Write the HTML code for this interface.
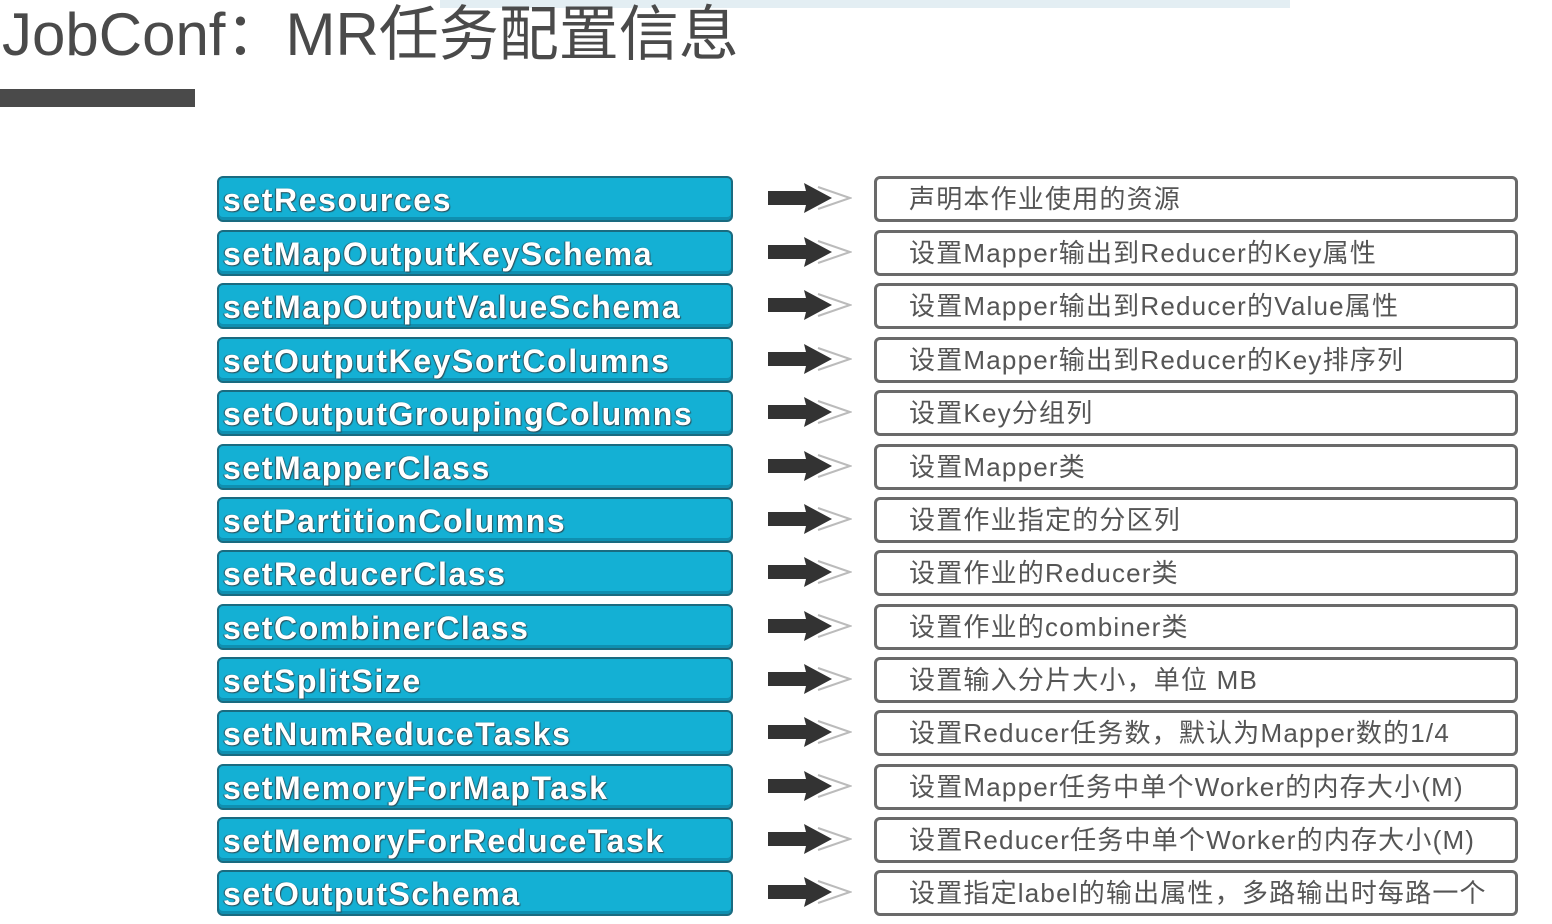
<!DOCTYPE html>
<html><head><meta charset="utf-8"><style>
html,body{margin:0;padding:0;background:#fff;width:1552px;height:924px;overflow:hidden;position:relative;font-family:"Liberation Sans","Noto Sans CJK SC",sans-serif}
.topbar{position:absolute;left:440px;top:0;width:850px;height:8px;background:#e3eef3}
.title{position:absolute;left:2px;top:0px;font-size:60px;color:#4a4a4a;letter-spacing:0;line-height:70px;white-space:nowrap}
.ul{position:absolute;left:0;top:89px;width:195px;height:18px;background:#4a4a4a}
.l{position:absolute;left:217px;width:508px;height:42px;background:#14b0d4;border:2px solid #1a6b80;border-radius:6px;box-shadow:inset 0 -3px 0 #0f8fb0;color:#fff;font-weight:bold;font-size:32px;line-height:44px;padding-left:4px;box-sizing:content-box;text-shadow:1px 1px 1px #2a4f5a,-1px 0 1px #2a4f5a;white-space:nowrap;letter-spacing:1.6px;overflow:hidden}
.r{position:absolute;left:874px;width:606px;height:40px;border:3px solid #6a6a6a;border-radius:6px;background:#fff;color:#555;font-size:26px;line-height:40px;padding-left:32px;box-sizing:content-box;white-space:nowrap;letter-spacing:1.2px;overflow:hidden}
.a{position:absolute;left:766px;width:86px;height:34px}
</style></head><body>
<div class="topbar"></div>
<div class="title">JobConf：MR任务配置信息</div>
<div class="ul"></div>
<svg width="0" height="0" style="position:absolute"><defs>
<g id="ar"><path d="M2 10 H40 L38 2 L66 17 L38 32 L40 24 H2 Z" fill="#333"/><path d="M52 6 L84 17 L52 28" fill="none" stroke="#bbb" stroke-width="2"/></g></defs></svg>
<div class="l" style="top:176px">setResources</div>
<div class="l" style="top:230px">setMapOutputKeySchema</div>
<div class="l" style="top:283px">setMapOutputValueSchema</div>
<div class="l" style="top:337px">setOutputKeySortColumns</div>
<div class="l" style="top:390px">setOutputGroupingColumns</div>
<div class="l" style="top:444px">setMapperClass</div>
<div class="l" style="top:497px">setPartitionColumns</div>
<div class="l" style="top:550px">setReducerClass</div>
<div class="l" style="top:604px">setCombinerClass</div>
<div class="l" style="top:657px">setSplitSize</div>
<div class="l" style="top:710px">setNumReduceTasks</div>
<div class="l" style="top:764px">setMemoryForMapTask</div>
<div class="l" style="top:817px">setMemoryForReduceTask</div>
<div class="l" style="top:870px">setOutputSchema</div>

<svg class="a" style="top:181px"><use href="#ar"/></svg>
<svg class="a" style="top:235px"><use href="#ar"/></svg>
<svg class="a" style="top:288px"><use href="#ar"/></svg>
<svg class="a" style="top:342px"><use href="#ar"/></svg>
<svg class="a" style="top:395px"><use href="#ar"/></svg>
<svg class="a" style="top:449px"><use href="#ar"/></svg>
<svg class="a" style="top:502px"><use href="#ar"/></svg>
<svg class="a" style="top:555px"><use href="#ar"/></svg>
<svg class="a" style="top:609px"><use href="#ar"/></svg>
<svg class="a" style="top:662px"><use href="#ar"/></svg>
<svg class="a" style="top:715px"><use href="#ar"/></svg>
<svg class="a" style="top:769px"><use href="#ar"/></svg>
<svg class="a" style="top:822px"><use href="#ar"/></svg>
<svg class="a" style="top:875px"><use href="#ar"/></svg>

<div class="r" style="top:176px">声明本作业使用的资源</div>
<div class="r" style="top:230px">设置Mapper输出到Reducer的Key属性</div>
<div class="r" style="top:283px">设置Mapper输出到Reducer的Value属性</div>
<div class="r" style="top:337px">设置Mapper输出到Reducer的Key排序列</div>
<div class="r" style="top:390px">设置Key分组列</div>
<div class="r" style="top:444px">设置Mapper类</div>
<div class="r" style="top:497px">设置作业指定的分区列</div>
<div class="r" style="top:550px">设置作业的Reducer类</div>
<div class="r" style="top:604px">设置作业的combiner类</div>
<div class="r" style="top:657px">设置输入分片大小，单位 MB</div>
<div class="r" style="top:710px">设置Reducer任务数，默认为Mapper数的1/4</div>
<div class="r" style="top:764px">设置Mapper任务中单个Worker的内存大小(M)</div>
<div class="r" style="top:817px">设置Reducer任务中单个Worker的内存大小(M)</div>
<div class="r" style="top:870px">设置指定label的输出属性，多路输出时每路一个</div>
</body></html>
